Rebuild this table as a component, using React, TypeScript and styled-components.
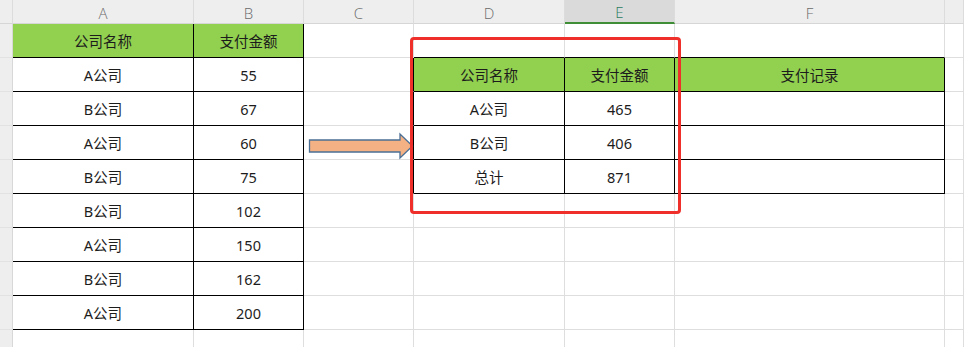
import React from "react";
import styled, { createGlobalStyle } from "styled-components";

// column widths include the 1px gridline on the right of each column
const COLUMN_WIDTHS = [13, 181, 110, 110, 151, 110, 270];
const LETTERS = ["", "A", "B", "C", "D", "E", "F", ""];
const SELECTED_COL = 5;

const GREEN = "#92d050";
const GRID = "#dedede";
const INK = "#000";

type CellData = { text?: string; fill?: string };

// row number -> column index -> cell
const CELLS: Record<number, Record<number, CellData>> = {
    1: { 1: { text: "公司名称", fill: GREEN }, 2: { text: "支付金额", fill: GREEN } },
    2: {
        1: { text: "A公司" }, 2: { text: "55" },
        4: { text: "公司名称", fill: GREEN }, 5: { text: "支付金额", fill: GREEN }, 6: { text: "支付记录", fill: GREEN },
    },
    3: { 1: { text: "B公司" }, 2: { text: "67" }, 4: { text: "A公司" }, 5: { text: "465" }, 6: {} },
    4: { 1: { text: "A公司" }, 2: { text: "60" }, 4: { text: "B公司" }, 5: { text: "406" }, 6: {} },
    5: { 1: { text: "B公司" }, 2: { text: "75" }, 4: { text: "总计" }, 5: { text: "871" }, 6: {} },
    6: { 1: { text: "B公司" }, 2: { text: "102" } },
    7: { 1: { text: "A公司" }, 2: { text: "150" } },
    8: { 1: { text: "B公司" }, 2: { text: "162" } },
    9: { 1: { text: "A公司" }, 2: { text: "200" } },
};

const ROW_COUNT = 10;

// a cell gets black borders when it sits in one of the two tables
const inTable = (row: number, col: number) => !!CELLS[row]?.[col];

const GlobalStyle = createGlobalStyle`
    html, body {
        margin: 0;
        padding: 0;
        background: #ffffff;
        overflow: hidden;
    }
`;

const Sheet = styled.div`
    position: relative;
    width: 964px;
    height: 347px;
    overflow: hidden;
    display: grid;
    grid-template-columns: ${COLUMN_WIDTHS.map(w => `${w}px`).join(" ")} 1fr;
    grid-template-rows: 24px repeat(${ROW_COUNT}, 34px);
    font-family: "Noto Sans", "Noto Sans CJK SC", sans-serif;
`;

const ColumnHeader = styled.div<{ $selected?: boolean }>`
    box-sizing: border-box;
    display: flex;
    align-items: center;
    justify-content: center;
    background: ${p => (p.$selected ? "#dadada" : "#eeeeee")};
    border-right: 1px solid #dcdcdc;
    border-bottom: ${p => (p.$selected ? "2px solid #3f8d36" : "1px solid #d6d6d6")};
    color: ${p => (p.$selected ? "#2a7b5e" : "#6a6a6a")};
    font-family: "Open Sans", "Noto Sans", sans-serif;
    font-size: 15px;
    font-weight: 300;
    padding-top: 2px;
`;

const RowHeader = styled.div`
    box-sizing: border-box;
    background: #eeeeee;
    border-right: 1px solid #d8d8d8;
    border-bottom: 1px solid #e2e2e2;
`;

const Cell = styled.div<{ $fill?: string; $right: string; $bottom: string }>`
    box-sizing: border-box;
    display: flex;
    align-items: center;
    justify-content: center;
    background: ${p => p.$fill ?? "#ffffff"};
    border-right: 1px solid ${p => p.$right};
    border-bottom: 1px solid ${p => p.$bottom};
    color: #1c1c1c;
    font-size: 14.5px;
    white-space: nowrap;
`;

const Highlight = styled.div`
    position: absolute;
    left: 410px;
    top: 37px;
    width: 271px;
    height: 177px;
    box-sizing: border-box;
    border: 3px solid #ef2f2a;
    border-radius: 4px;
    pointer-events: none;
`;

const ArrowMark = styled.svg`
    position: absolute;
    left: 308px;
    top: 132px;
`;

function Arrow() {
    return (
        <ArrowMark width="108" height="28" viewBox="0 0 108 28">
            <polygon
                points="1.5,8 92,8 92,2 104.5,14 92,26 92,20 1.5,20"
                fill="#f4b183"
                stroke="#4a6f95"
                strokeWidth="1.3"
                strokeLinejoin="miter"
            />
        </ArrowMark>
    );
}

export default function App() {
    const rows = Array.from({ length: ROW_COUNT }, (_, i) => i + 1);
    const cols = LETTERS.map((_, i) => i);

    return (
        <>
            <GlobalStyle />
            <Sheet>
                {LETTERS.map((letter, i) => (
                    <ColumnHeader key={`h${i}`} $selected={i === SELECTED_COL}>
                        {letter}
                    </ColumnHeader>
                ))}

                {rows.map(row =>
                    cols.map(col => {
                        if (col === 0) return <RowHeader key={`${row}-0`} />;
                        const data = CELLS[row]?.[col];
                        const here = inTable(row, col);
                        const right = here || inTable(row, col + 1) ? INK : GRID;
                        const bottom = here || inTable(row + 1, col) ? INK : GRID;
                        return (
                            <Cell key={`${row}-${col}`} $fill={data?.fill} $right={right} $bottom={bottom}>
                                {data?.text}
                            </Cell>
                        );
                    })
                )}

                <Arrow />
                <Highlight />
            </Sheet>
        </>
    );
}
